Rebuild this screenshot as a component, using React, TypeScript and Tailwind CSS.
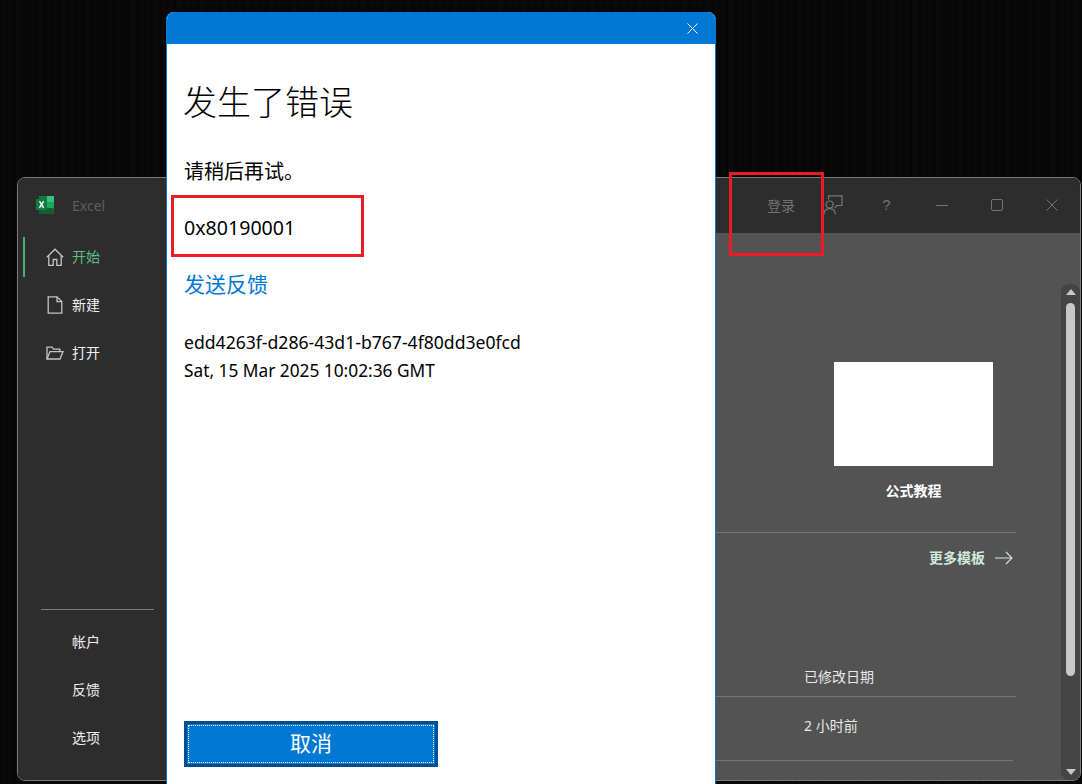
import React from "react";

const sans = "font-['Noto_Sans','Noto_Sans_CJK_SC',sans-serif]";

const ExcelLogo = () => (
  <svg width="18" height="18" viewBox="0 0 18 18">
    <rect x="3" y="0" width="15" height="18" rx="1.5" fill="#21a366" />
    <rect x="3" y="0" width="8" height="6" fill="#107c41" />
    <rect x="11" y="0" width="7" height="6" fill="#33c481" />
    <rect x="3" y="6" width="8" height="6" fill="#185c37" opacity="0.7" />
    <rect x="11" y="6" width="7" height="6" fill="#21a366" />
    <rect x="3" y="12" width="15" height="6" rx="1.5" fill="#185c37" />
    <rect x="0" y="3" width="11" height="11" rx="1" fill="#107c41" />
    <path d="M2.8 5.2h1.8l1 2 1-2h1.7L6.5 8.5l1.9 3.3H6.6l-1.1-2.1-1 2.1H2.7l1.9-3.3z" fill="#fff" />
  </svg>
);

const HomeIcon = () => (
  <svg width="18" height="18" viewBox="0 0 18 18" fill="none" stroke="#c4c4c4" strokeWidth="1.3">
    <path d="M.8 9.200 9 1.200l8.200 8" />
    <path d="M2.800 7.600v9.700h4.400v-5.800h3.600v5.800h4.400V7.600" />
  </svg>
);

const FileIcon = () => (
  <svg width="18" height="18" viewBox="0 0 18 18" fill="none" stroke="#c4c4c4" strokeWidth="1.3">
    <path d="M2.200 .8h8.800l4.800 4.800v11.600H2.200z" />
    <path d="M11 .8v4.800h4.800" />
  </svg>
);

const FolderIcon = () => (
  <svg width="18" height="18" viewBox="0 0 18 18" fill="none" stroke="#c4c4c4" strokeWidth="1.3">
    <path d="M1 15V3.200h5l1.600 2h6.200v2.400" />
    <path d="M1 15l3-7.400h13L14 15z" />
  </svg>
);

const FeedbackIcon = () => (
  <svg width="20" height="20" viewBox="0 0 20 20" fill="none" stroke="#7a7a7a" strokeWidth="1.2">
    <path d="M5.500 4.500V.9h13.500v9.600h-5l-2.400 2.600" />
    <circle cx="6.600" cy="9.600" r="3.600" />
    <path d="M.8 19.500c.3-3.400 2.600-5.800 5.800-5.800s5.500 2.400 5.800 5.800" />
  </svg>
);

const WindowControls = () => (
  <div className="flex items-center mr-px">
    <div className="w-[55px] flex justify-center text-[15px] text-[#737373] font-['Liberation_Sans',sans-serif]">?</div>
    <div className="w-[55px] flex justify-center">
      <div className="w-[12px] h-px bg-[#737373]" />
    </div>
    <div className="w-[55px] flex justify-center">
      <div className="w-[12px] h-[12px] rounded-[2px] border border-[#737373]" />
    </div>
    <div className="w-[55px] flex justify-center">
      <svg width="12" height="12" viewBox="0 0 12 12" stroke="#737373" strokeWidth="1">
        <path d="M.5.500l11 11M11.500.500l-11 11" />
      </svg>
    </div>
  </div>
);

const navTop = [
  { label: "开始", icon: <HomeIcon />, active: true },
  { label: "新建", icon: <FileIcon />, active: false },
  { label: "打开", icon: <FolderIcon />, active: false },
];

const Sidebar = () => (
  <div className="w-[148px] shrink-0 h-full flex flex-col pt-[4px] pb-[23px] bg-[#2d2d2d]">
    <div className="flex flex-col gap-[8px]">
      {navTop.map((item) => (
        <div key={item.label} className="h-[40px] flex items-center">
          <div className={`w-[2px] h-[40px] ml-[5px] ${item.active ? "bg-[#4caf78]" : ""}`} />
          <div className="ml-[21px] w-[18px] flex justify-center">{item.icon}</div>
          <span className={`ml-[8px] pb-[2px] text-[14px] ${item.active ? "text-[#5cbd85]" : "text-[#f0f0f0]"}`}>{item.label}</span>
        </div>
      ))}
    </div>
    <div className="mt-auto ml-[23px] mr-[12px] h-px bg-[#7d7d7d]" />
    <div className="mt-[11px] flex flex-col gap-[8px]">
      {["帐户", "反馈", "选项"].map((t) => (
        <div key={t} className="h-[40px] flex items-center pl-[54px] text-[14px] text-[#f0f0f0]">
          {t}
        </div>
      ))}
    </div>
  </div>
);

const Scrollbar = () => (
  <div className="w-[19px] mt-[51px] shrink-0 rounded-[8px] bg-[#444444] flex flex-col items-center">
    <div className="mt-[5px] w-0 h-0 border-x-[5px] border-x-transparent border-b-[6px] border-b-[#c8c8c8]" />
    <div className="mt-[8px] w-[9px] h-[373px] rounded-[5px] bg-[#c8c8c8]" />
    <div className="mt-auto mb-[5px] w-0 h-0 border-x-[5px] border-x-transparent border-t-[6px] border-t-[#c8c8c8]" />
  </div>
);

const MainArea = () => (
  <div className="flex-1 h-full flex bg-[#535353]">
    <div className="flex-1 pl-[550px] pr-[45px] pt-[129px] text-[14px] text-[#e8e8e8]">
      <div className="flex justify-end pr-[23px]">
        <div className="w-[159px] flex flex-col items-center">
          <div className="w-[159px] h-[104px] bg-white" />
          <div className="mt-[15px] h-[20px] font-bold text-white leading-[20px]">公式教程</div>
        </div>
      </div>
      <div className="mt-[31px] h-px bg-[#757575]" />
      <div className="mt-[14px] h-[20px] flex items-center justify-end pr-[3px] text-[#cfeadb] font-bold">
        <span>更多模板</span>
        <svg className="ml-[10px] mt-[2px]" width="18" height="14" viewBox="0 0 18 14" fill="none" stroke="#cfeadb" strokeWidth="1.1">
          <path d="M0 7h17M11 1l6 6-6 6" />
        </svg>
      </div>
      <div className="mt-[100px] h-[20px] pl-[88px] leading-[20px]">已修改日期</div>
      <div className="mt-[9px] h-px bg-[#757575]" />
      <div className="mt-[19px] h-[20px] pl-[88px] leading-[20px]">2 小时前</div>
      <div className="mt-[24px] mr-[3px] h-px bg-[#757575]" />
    </div>
    <Scrollbar />
  </div>
);

const ErrorDialog = () => (
  <div className="absolute left-[166px] top-[12px] w-[550px] h-[772px] rounded-t-[8px] border-x border-[#0078d4] bg-white flex flex-col overflow-hidden">
    <div className="h-[32px] shrink-0 bg-[#0078d4] flex items-center justify-end pr-[17px]">
      <svg width="11" height="11" viewBox="0 0 11 11" stroke="#fff" strokeWidth="1">
        <path d="M.5.500l10 10M10.500.500l-10 10" />
      </svg>
    </div>
    <div className="flex-1 flex flex-col pl-[17px] pb-[17px] text-black">
      <h1 className="mt-[34px] -ml-px text-[34px] leading-[48px] font-light">发生了错误</h1>
      <p className="mt-[32px] text-[20px] leading-[28px]">请稍后再试。</p>
      <p className="mt-[28px] text-[19.6px] leading-[28px]">0x80190001</p>
      <a className="mt-[28px] text-[21px] leading-[28px] text-[#0078d4]">发送反馈</a>
      <p className="mt-[30px] text-[17.6px] leading-[28px]">edd4263f-d286-43d1-b767-4f80dd3e0fcd</p>
      <p className="mt-px text-[17.3px] leading-[28px]">Sat, 15 Mar 2025 10:02:36 GMT</p>
      <button className="mt-auto w-[254px] h-[46px] border-[3px] border-[#004e8c] bg-[#0078d4] p-px">
        <span className="h-full w-full flex items-center justify-center border border-dotted border-white text-[21px] text-white">
          取消
        </span>
      </button>
    </div>
  </div>
);

export default function App() {
  return (
    <div
      className={`${sans} relative w-[1082px] h-[784px] overflow-hidden bg-[#070707] bg-[repeating-linear-gradient(90deg,#060606_0px,#0a0a0a_3px,#070707_6px,#090909_11px,#050505_14px,#0b0b0b_17px,#060606_23px)]`}
    >
      <div className="pt-[177px] pl-[17px]">
        <div className="w-[1064px] h-[604px] rounded-[8px] border border-[#7a7a7a] overflow-hidden flex flex-col">
          <div className="h-[55px] pb-px shrink-0 bg-[#2d2d2d] flex items-center">
            <div className="ml-[18px]"><ExcelLogo /></div>
            <span className="ml-[18px] text-[14px] text-[#5e5e5e]">Excel</span>
            <div className="ml-auto flex items-center">
              <span className="text-[14px] text-[#737373]">登录</span>
              <div className="ml-[28px]"><FeedbackIcon /></div>
              <div className="ml-[16px]"><WindowControls /></div>
            </div>
          </div>
          <div className="flex-1 min-h-0 flex">
            <Sidebar />
            <MainArea />
          </div>
        </div>
      </div>
      <ErrorDialog />
      {/* annotation boxes drawn over the screenshot */}
      <div className="absolute left-[171px] top-[195px] w-[193px] h-[62px] border-[3px] border-[#ed1c24]" />
      <div className="absolute left-[729px] top-[172px] w-[95px] h-[84px] border-[3px] border-[#ed1c24]" />
    </div>
  );
}
